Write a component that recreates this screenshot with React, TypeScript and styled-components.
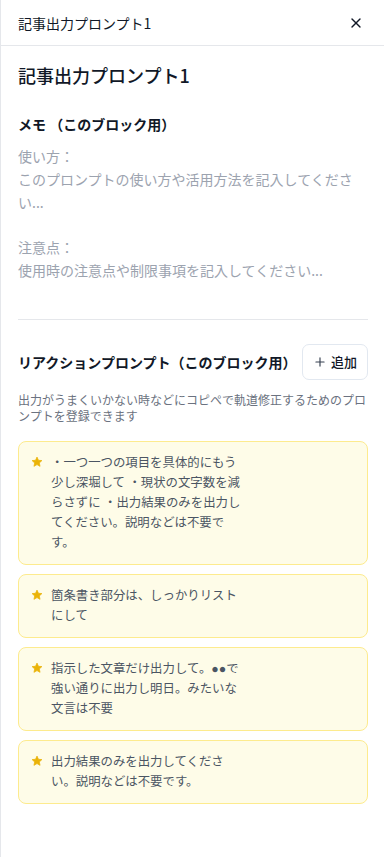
import React from "react";
import styled, { createGlobalStyle } from "styled-components";
import { X, Plus } from "lucide-react";

const Global = createGlobalStyle`
  html, body { margin: 0; padding: 0; background: #ffffff; }
  body {
    font-family: "Noto Sans CJK JP", "Noto Sans", Inter, sans-serif;
    color: #111827;
    -webkit-font-smoothing: antialiased;
  }
  * { box-sizing: border-box; }
`;

const Panel = styled.div`
  width: 384px;
  min-height: 857px;
  border-left: 1px solid #e5e7eb;
  background: #ffffff;
  display: flex;
  flex-direction: column;
`;

const Header = styled.header`
  height: 46px;
  padding: 0 16px 0 17px;
  border-bottom: 1px solid #e5e7eb;
  display: flex;
  align-items: center;
  justify-content: space-between;
`;

const HeaderTitle = styled.div`
  font-size: 14px;
  line-height: 20px;
  color: #111827;
`;

const CloseButton = styled.button`
  border: none;
  background: transparent;
  padding: 0;
  width: 24px;
  height: 24px;
  display: flex;
  align-items: center;
  justify-content: center;
  color: #111827;
  cursor: pointer;
`;

const Body = styled.main`
  padding: 15px 16px 24px 17px;
  display: flex;
  flex-direction: column;
`;

const Title = styled.h2`
  margin: 0;
  font-size: 18px;
  line-height: 28px;
  font-weight: 500;
  color: #111827;
`;

const SectionLabel = styled.h3`
  margin: 25px 0 0;
  font-size: 14px;
  line-height: 20px;
  font-weight: 700;
  color: #111827;
`;

const Memo = styled.div`
  margin-top: 11px;
  font-size: 14px;
  line-height: 22.75px;
  color: #9ca3af;
  white-space: pre-wrap;
`;

const Divider = styled.hr`
  margin: 37px 0 0;
  border: none;
  border-top: 1px solid #e5e7eb;
`;

const ReactionRow = styled.div`
  margin-top: 24px;
  display: flex;
  align-items: center;
  justify-content: space-between;
`;

const ReactionTitle = styled.h3`
  margin: 0;
  font-size: 14px;
  line-height: 20px;
  font-weight: 700;
  color: #111827;
`;

const AddButton = styled.button`
  height: 36px;
  width: 66px;
  border: 1px solid #e2e8f0;
  border-radius: 7px;
  background: #ffffff;
  display: flex;
  align-items: center;
  justify-content: center;
  gap: 4px;
  font-family: inherit;
  font-size: 13px;
  font-weight: 500;
  color: #111827;
  padding: 0;
  cursor: pointer;
  svg { color: #374151; }
`;

const Description = styled.p`
  margin: 12px 0 0;
  font-size: 12px;
  line-height: 16px;
  color: #6b7280;
`;

const CardList = styled.div`
  margin-top: 17px;
  display: flex;
  flex-direction: column;
  gap: 9px;
`;

const Card = styled.div`
  border: 1px solid #fdeb8e;
  background: #fefce8;
  border-radius: 8px;
  padding: 11px 12px 11px 12px;
  display: flex;
  align-items: flex-start;
  gap: 8px;
`;

const StarWrap = styled.span`
  flex: none;
  width: 12px;
  height: 20px;
  display: flex;
  align-items: center;
  justify-content: center;
  margin-top: -1px;
`;

const CardText = styled.div`
  font-family: "Liberation Sans", "Noto Sans CJK JP", sans-serif;
  font-size: 12.4px;
  line-height: 20px;
  color: #4b5563;
  white-space: pre-line;
`;

const Star = () => (
  <svg width="12" height="12" viewBox="0 0 24 24" aria-hidden="true">
    <path
      d="M12 2.2l2.9 6.3 6.9.7-5.2 4.7 1.5 6.8L12 17.2l-6.1 3.5 1.5-6.8-5.2-4.7 6.9-.7z"
      fill="#eab308"
      stroke="#eab308"
      strokeWidth="1.5"
      strokeLinejoin="round"
    />
  </svg>
);

const prompts = [
  "・一つ一つの項目を具体的にもう\n少し深堀して ・現状の文字数を減\nらさずに ・出力結果のみを出力し\nてください。説明などは不要で\nす。",
  "箇条書き部分は、しっかりリスト\nにして",
  "指示した文章だけ出力して。●●で\n強い通りに出力し明日。みたいな\n文言は不要",
  "出力結果のみを出力してくださ\nい。説明などは不要です。",
];

export default function App() {
  return (
    <>
      <Global />
      <Panel>
        <Header>
          <HeaderTitle>記事出力プロンプト1</HeaderTitle>
          <CloseButton aria-label="閉じる">
            <X size={16} strokeWidth={2} />
          </CloseButton>
        </Header>
        <Body>
          <Title>記事出力プロンプト1</Title>
          <SectionLabel>メモ （このブロック用）</SectionLabel>
          <Memo>
            {"使い方：\nこのプロンプトの使い方や活用方法を記入してください...\n\n注意点：\n使用時の注意点や制限事項を記入してください..."}
          </Memo>
          <Divider />
          <ReactionRow>
            <ReactionTitle>リアクションプロンプト（このブロック用）</ReactionTitle>
            <AddButton>
              <Plus size={14} strokeWidth={2} />
              追加
            </AddButton>
          </ReactionRow>
          <Description>
            出力がうまくいかない時などにコピペで軌道修正するためのプロンプトを登録できます
          </Description>
          <CardList>
            {prompts.map((p, i) => (
              <Card key={i}>
                <StarWrap>
                  <Star />
                </StarWrap>
                <CardText>{p}</CardText>
              </Card>
            ))}
          </CardList>
        </Body>
      </Panel>
    </>
  );
}
